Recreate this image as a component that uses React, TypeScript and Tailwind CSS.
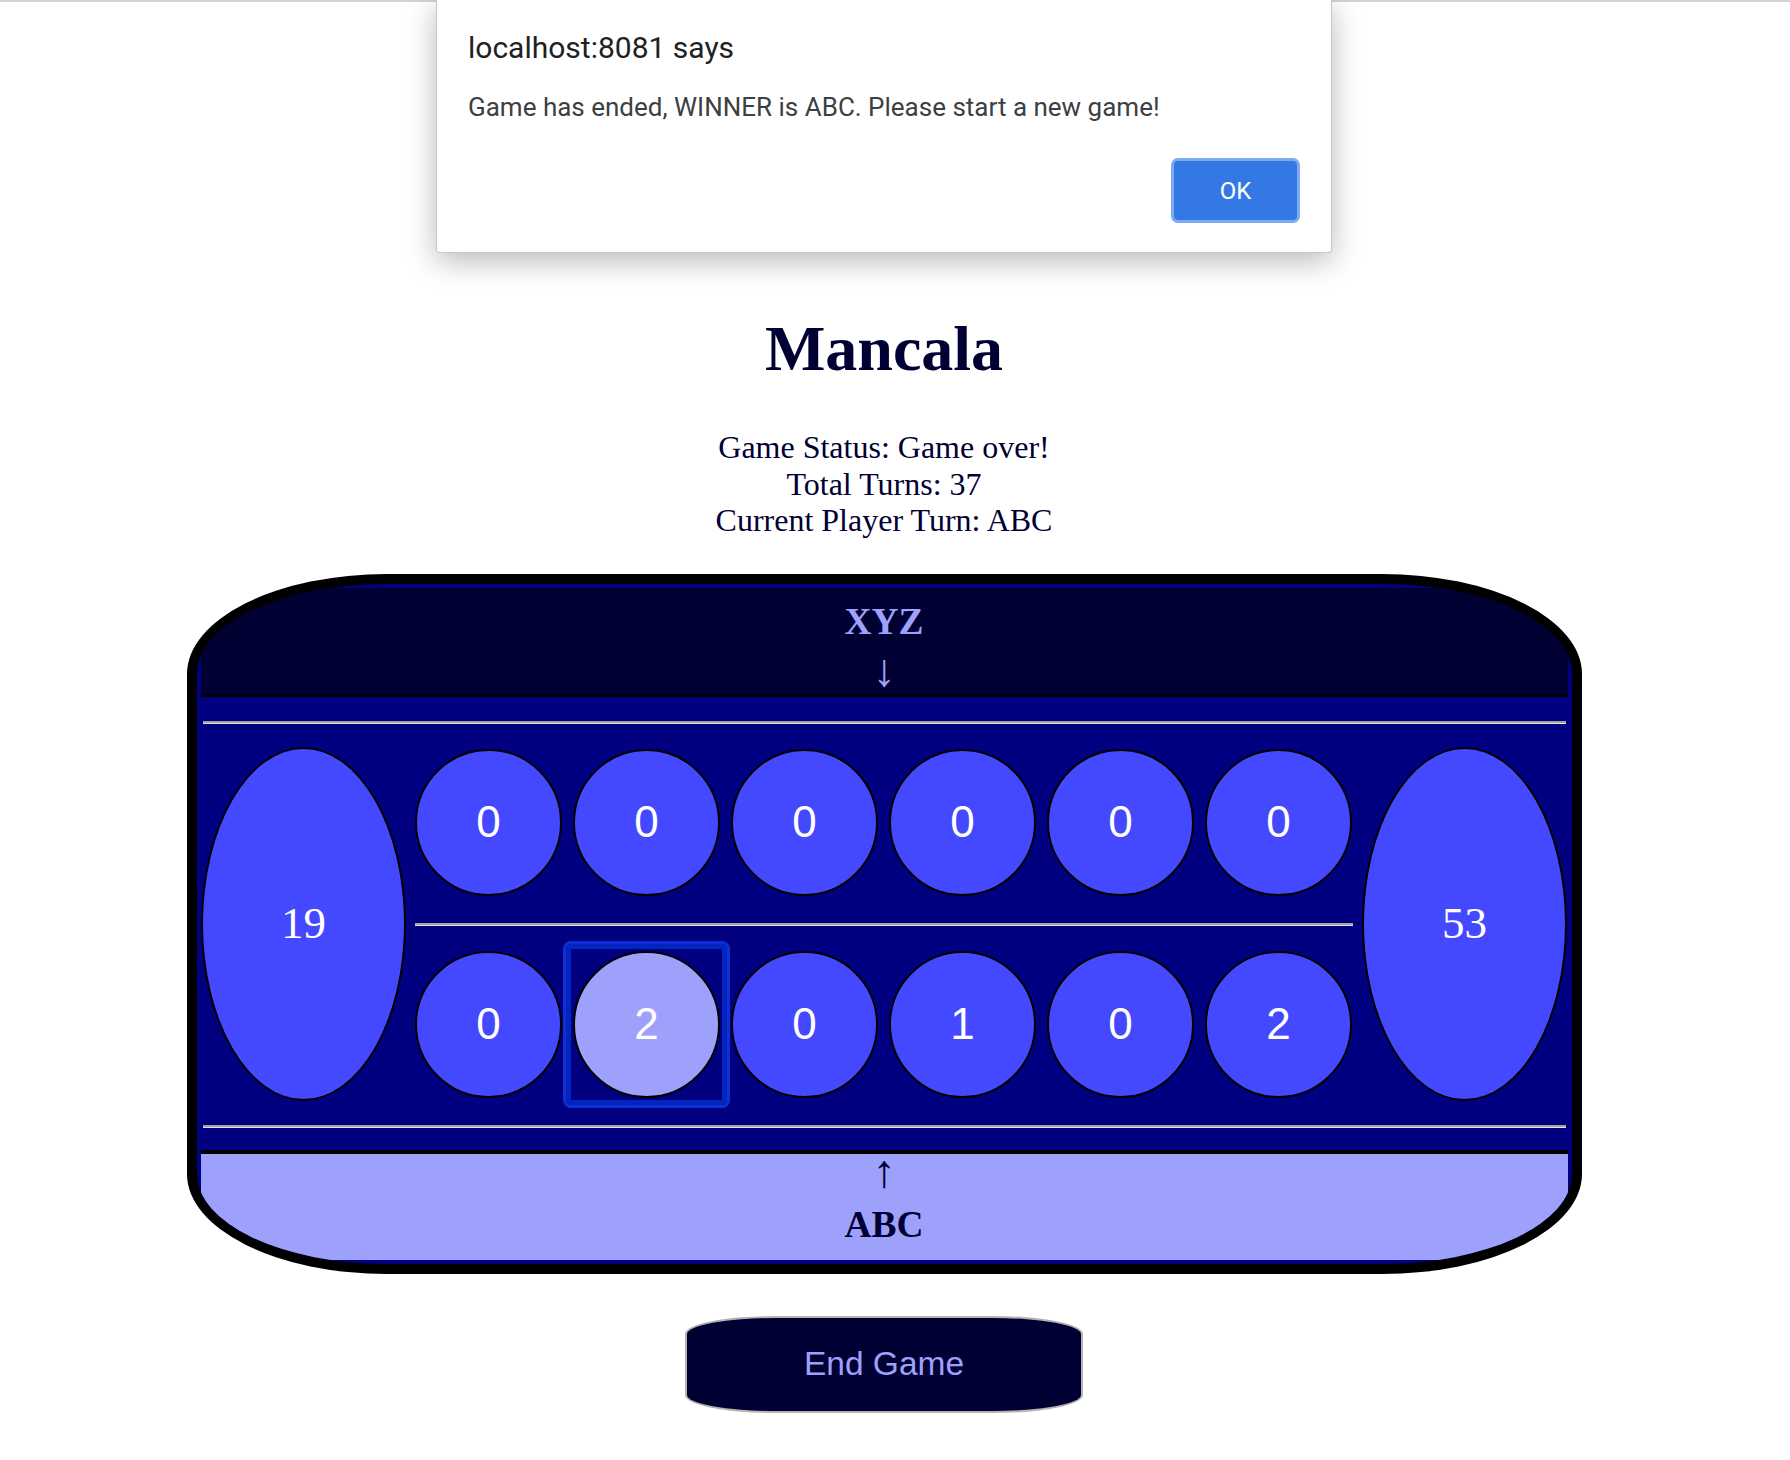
const serif = "font-['Liberation_Serif','Times_New_Roman',serif]";
const sans = "font-['Liberation_Sans',Arial,sans-serif]";

const topPits = [0, 0, 0, 0, 0, 0];
const bottomPits = [0, 2, 0, 1, 0, 2];

const Pit = ({ count, selected = false }: { count: number; selected?: boolean }) => {
  const circle = (
    <div
      className={`flex h-[147px] w-[147px] shrink-0 items-center justify-center rounded-full border-2 border-black text-[44px] text-white ${sans} ${
        selected ? "bg-[#9da1fc]" : "bg-[#4448ff]"
      }`}
    >
      {count}
    </div>
  );
  if (!selected) return circle;
  return (
    <div className="-m-[7px] shrink-0 rounded-[5px] border-[5px] border-[#0224bf] p-[2px] outline-[3px] outline-solid outline-[#0c30d2]">
      {circle}
    </div>
  );
};

const Store = ({ count }: { count: number }) => (
  <div
    className={`flex h-[354px] w-[205px] shrink-0 items-center justify-center rounded-[50%] border-2 border-black bg-[#4448ff] text-[45px] text-white ${serif}`}
  >
    {count}
  </div>
);

const Line = ({ className = "" }: { className?: string }) => (
  <div className={`h-[3px] border-t-2 border-b border-t-[#a3a3a3] border-b-[#e4e4e4] ${className}`} />
);

const Board = () => (
  <div className="mt-[35px] w-[1395px] overflow-hidden rounded-[200px/100px] border-[10px] border-black bg-[#000080] p-[4px]">
    <div className="flex h-[109px] flex-col items-center border-b-[3px] border-black bg-[#000033] pt-[12px] text-[#9da1fc]">
      <h3 className={`text-[37.44px] font-bold leading-[44px] ${serif}`}>XYZ</h3>
      <div className={`mt-[9px] text-[46px] leading-[36px] ${serif}`}>↓</div>
    </div>

    <div className="pt-[24px] pb-[22px]">
      <Line className="mx-[2px]" />
      <div className="mt-[23px] flex items-center justify-center gap-[9px]">
        <Store count={19} />
        <div className="flex h-[354px] w-[938px] shrink-0 flex-col pt-[2px]">
          <div className="flex gap-[11px]">
            {topPits.map((n, i) => (
              <Pit key={i} count={n} />
            ))}
          </div>
          <Line className="mt-[27px]" />
          <div className="mt-[25px] flex gap-[11px]">
            {bottomPits.map((n, i) => (
              <Pit key={i} count={n} selected={i === 1} />
            ))}
          </div>
        </div>
        <Store count={53} />
      </div>
      <Line className="mx-[2px] mt-[24px]" />
    </div>

    <div className="flex h-[110px] flex-col items-center border-t-4 border-black bg-[#9da1fc] text-[#000033]">
      <div className={`text-[46px] leading-[36px] ${serif}`}>↑</div>
      <h3 className={`mt-[13px] text-[37.44px] font-bold leading-[44px] ${serif}`}>ABC</h3>
    </div>
  </div>
);

const AlertDialog = () => (
  <div className="absolute top-0 left-[436px] flex h-[253px] w-[896px] flex-col rounded-b-[4px] border border-t-0 border-[#c8c8c8] bg-white px-[31px] pt-[30px] pb-[29px] shadow-[0_8px_30px_rgba(0,0,0,0.28)] font-['Roboto','Liberation_Sans',sans-serif]">
    <div className="text-[30px] leading-[36px] text-[#202124]">localhost:8081 says</div>
    <div className="mt-[25px] text-[26px] leading-[32px] text-[#3c4043]">
      Game has ended, WINNER is ABC. Please start a new game!
    </div>
    <div className="mt-[35px] flex justify-end">
      <button className="h-[65px] w-[129px] rounded-[7px] border-[3px] border-[#7eaaf2] bg-[#3478e5] text-[24px] text-white">
        OK
      </button>
    </div>
  </div>
);

export default function App() {
  return (
    <div className="relative min-h-[1460px] w-full bg-white">
      <div className="h-[2px] w-full bg-[#d3d3d3]" />
      <main className="flex w-[1768px] flex-col items-center text-[#000033]">
        <h1 className={`mt-[310px] text-[64px] font-bold leading-[74px] ${serif}`}>Mancala</h1>
        <div className={`mt-[43px] text-center text-[32px] leading-[36.5px] ${serif}`}>
          <div>Game Status: Game over!</div>
          <div>Total Turns: 37</div>
          <div>Current Player Turn: ABC</div>
        </div>
        <Board />
        <button
          className={`mt-[42px] h-[97px] w-[398px] rounded-[90px/18px] border-2 border-[#b4b4b4] bg-[#000033] text-[33.5px] text-[#9da1fc] ${sans}`}
        >
          End Game
        </button>
      </main>
      <AlertDialog />
    </div>
  );
}
